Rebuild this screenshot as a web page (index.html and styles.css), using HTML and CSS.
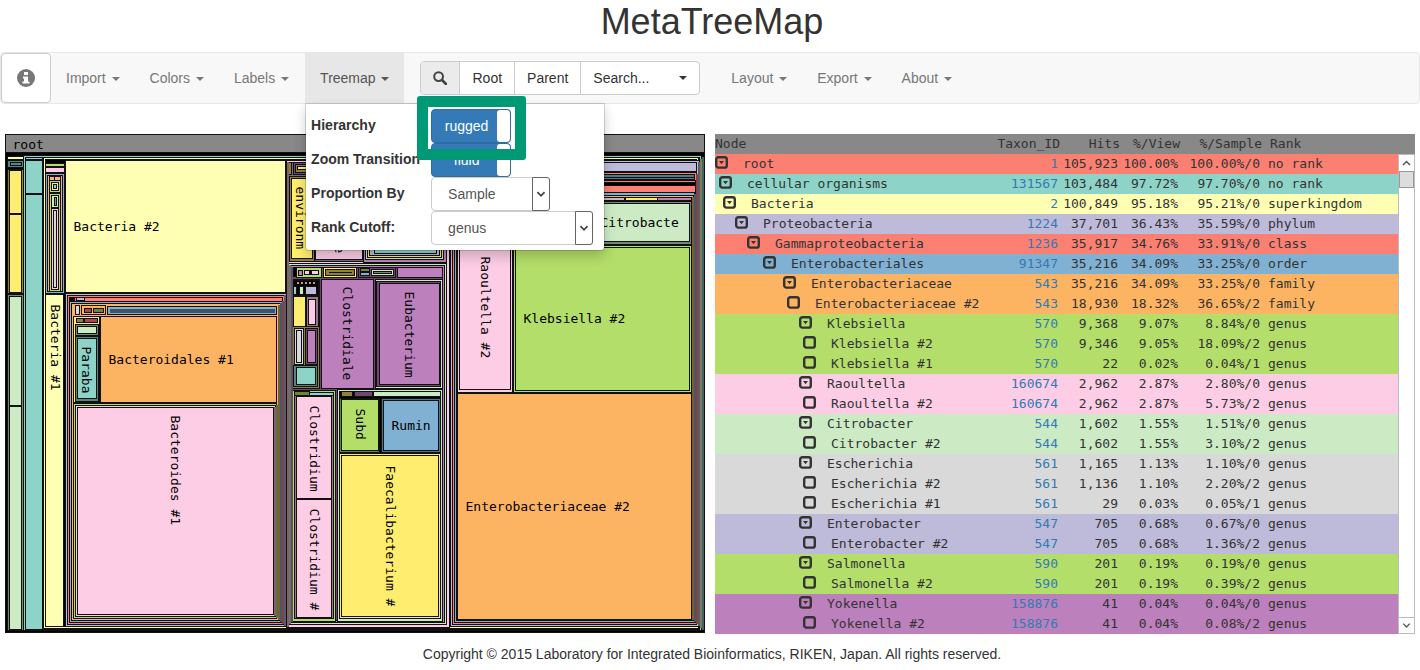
FILE: index.html
```html
<!DOCTYPE html>
<html lang="en">
<head>
<meta charset="utf-8">
<title>MetaTreeMap</title>
<link rel="stylesheet" href="styles.css">
</head>
<body>
<svg class="defs" aria-hidden="true">
  <symbol id="open" viewBox="0 0 14 14"><rect x="1.2" y="1.2" width="10.6" height="10.4" rx="2.2" fill="none" stroke="#333" stroke-width="2.4"/><path d="M4 5h5L6.500 8.200z" fill="#333"/></symbol>
  <symbol id="leaf" viewBox="0 0 14 14"><rect x="1.2" y="1.2" width="10.6" height="10.4" rx="2.2" fill="none" stroke="#333" stroke-width="2.4"/></symbol>
</svg>
<header class="title"><h1>MetaTreeMap</h1></header>
<nav class="navbar">
  <button class="info" aria-label="Information"><svg viewBox="0 0 18 18" width="18" height="18"><circle cx="9" cy="9" r="9" fill="#777"/><path d="M7 3h4v3H7zM6 7.500h5v5h1.500v2h-7v-2H7V9.500H6z" fill="#fff"/></svg></button>
  <button class="item">Import <i class="caret"></i></button>
  <button class="item">Colors <i class="caret"></i></button>
  <button class="item">Labels <i class="caret"></i></button>
  <div class="dropdown">
    <button class="item active">Treemap <i class="caret"></i></button>
    <form class="menu">
      <label for="hier">Hierarchy</label>
      <button type="button" id="hier" class="toggle"><span>rugged</span></button>
      <label for="zoom">Zoom Transition</label>
      <button type="button" id="zoom" class="toggle fluid"><span>fluid</span></button>
      <label for="prop">Proportion By</label>
      <div class="pick short"><select id="prop"><option>Sample</option></select><svg class="arrow" viewBox="0 0 18 32"><path d="M5 14l4 4 4-4" fill="none" stroke="#444" stroke-width="2"/></svg></div>
      <label for="rank">Rank Cutoff:</label>
      <div class="pick"><select id="rank"><option>genus</option></select><svg class="arrow" viewBox="0 0 18 32"><path d="M5 14l4 4 4-4" fill="none" stroke="#444" stroke-width="2"/></svg></div>
      <div class="highlight"></div>
    </form>
  </div>
  <div class="group">
    <button class="find" aria-label="Find"><svg viewBox="0 0 14 14" width="14" height="14"><circle cx="5.600" cy="5.600" r="4.400" fill="none" stroke="#444" stroke-width="2"/><path d="M9 9l4 4" stroke="#444" stroke-width="2.600" stroke-linecap="round"/></svg></button>
    <button>Root</button>
    <button>Parent</button>
    <button class="search"><span>Search...</span><i class="caret"></i></button>
  </div>
  <button class="item">Layout <i class="caret"></i></button>
  <button class="item">Export <i class="caret"></i></button>
  <button class="item">About <i class="caret"></i></button>
</nav>
<main class="panels">
<section class="panel">
<svg class="treemap" viewBox="4.5 133.5 700 500" role="img" aria-label="Treemap of taxa">
  <rect class="k" x="5" y="134" width="699" height="498"/>
  <rect class="head" x="5" y="134" width="699" height="18"/>
  <!-- outer columns -->
  <rect class="y" x="7" y="156" width="16" height="3"/>
  <rect class="td" x="7" y="160" width="16" height="7"/><rect class="td" x="10" y="162" width="11" height="3"/>
  <rect class="od" x="7" y="169" width="16" height="124"/><rect class="g" x="9" y="170" width="12" height="43"/><rect class="g" x="9" y="214" width="12" height="78"/>
  <rect class="ld" x="7" y="294" width="16" height="336"/><rect class="l" x="9" y="296" width="12" height="109"/><rect class="l" x="9" y="406" width="12" height="223"/>
  <rect class="t" x="23" y="155" width="678" height="475"/>
  <rect class="t" x="25" y="157" width="674" height="471"/>
  <rect class="v" x="25" y="157" width="17" height="2"/><rect class="t" x="25" y="160" width="17" height="33"/><rect class="t" x="25" y="194" width="17" height="435"/>
  <rect class="k" x="42" y="157" width="657" height="472"/>
  <rect class="y" x="43" y="157" width="655" height="471"/><rect class="k" x="45" y="159" width="651" height="467"/>
  <!-- small lineages beside Bacteria -->
  <rect class="gr" x="45" y="163" width="19" height="3"/><rect class="p" x="45" y="167" width="19" height="5"/>
  <rect class="b" x="45" y="173" width="19" height="120"/><rect class="o" x="47" y="175" width="15" height="116"/><rect class="o" x="49" y="176" width="11" height="4"/><path d="M54 176v5"/>
  <rect class="gr" x="49" y="180" width="11" height="12"/><rect class="g" x="51" y="182" width="7" height="8"/><rect class="t" x="53" y="184" width="3" height="4"/>
  <rect class="gr" x="49" y="193" width="11" height="98"/><rect class="l" x="51" y="195" width="7" height="12"/><rect class="m" x="54" y="197" width="2" height="8"/>
  <rect class="p" x="51" y="208" width="7" height="81"/><rect class="s" x="53" y="210" width="3" height="77"/>
  <rect class="y" x="45" y="294" width="18" height="332"/>
  <rect class="y" x="65" y="160" width="220" height="132"/>
  <!-- Bacteroidetes -->
  <rect class="v" x="65" y="293" width="222" height="333"/><rect class="r" x="67" y="295" width="218" height="329"/><rect class="r" x="69" y="297" width="213" height="4"/>
  <rect class="v" x="76" y="297" width="8" height="3"/><rect class="k" x="70" y="297" width="4" height="3"/>
  <rect class="b" x="69" y="301" width="213" height="321"/><rect class="o" x="71" y="303" width="209" height="317"/>
  <rect class="s" x="75" y="305" width="4" height="9"/><rect class="o" x="81" y="305" width="24" height="9"/><rect class="rd" x="84" y="308" width="7" height="4"/><rect class="grd" x="93" y="308" width="10" height="4"/>
  <rect class="b" x="107" y="306" width="169" height="8"/><rect fill="#3b5568" x="109" y="308" width="165" height="4"/>
  <rect class="g" x="73" y="316" width="26" height="86"/><rect class="od" x="76" y="318" width="7" height="4"/><rect class="rd" x="84" y="318" width="13" height="4"/>
  <rect class="ld" x="75" y="324" width="23" height="11"/><rect class="l" x="77" y="326" width="19" height="7"/>
  <rect class="td" x="75" y="336" width="23" height="65"/><rect class="t" x="77" y="338" width="19" height="60"/>
  <rect class="o" x="100" y="316" width="176" height="86"/>
  <rect class="gr" x="73" y="403" width="203" height="215"/><rect class="p" x="75" y="405" width="200" height="211"/><rect class="p" x="77" y="407" width="196" height="207"/>
  <g class="edges">
    <path class="ep" d="M274 406V615"/><path class="egr" d="M276 404V617"/><path class="eo" d="M278 304V619"/><path class="eb" d="M280 302V621"/><path class="er" d="M282 300V623"/><path class="ev" d="M284 294V625"/>
  </g>
  <!-- Firmicutes -->
  <rect class="p" x="286" y="160" width="163" height="467"/><rect class="vd" x="288" y="162" width="158" height="99"/>
  <rect class="od" x="288" y="162" width="3" height="12"/><rect class="md" x="293" y="162" width="30" height="12"/><rect class="od" x="295" y="164" width="22" height="8"/><rect class="g" x="297" y="166" width="14" height="3"/>
  <rect class="od" x="289" y="176" width="25" height="85"/><rect class="g" x="291" y="178" width="21" height="80"/>
  <rect class="p" x="315" y="176" width="47" height="83"/>
  <rect class="m" x="363" y="176" width="83" height="86"/><rect class="l" x="365" y="178" width="78" height="81"/><rect class="g" x="367" y="180" width="74" height="77"/><rect class="v" x="369" y="182" width="70" height="73"/><rect class="t" x="374" y="184" width="62" height="69"/>
  <rect class="l" x="288" y="263" width="158" height="361"/><rect class="m" x="290" y="265" width="154" height="357"/><rect class="md" x="292" y="267" width="150" height="353"/>
  <rect class="k" x="293" y="267" width="3" height="9"/><rect class="gr" x="296" y="267" width="25" height="10"/><rect class="m" x="298" y="270" width="4" height="5"/><rect class="p" x="304" y="270" width="14" height="4"/><rect class="k" x="309" y="271" width="2" height="2"/>
  <rect class="g" x="323" y="267" width="33" height="10"/><rect class="od" x="325" y="269" width="29" height="6"/><path d="M328 272h23"/>
  <rect class="md" x="358" y="267" width="37" height="10"/><rect class="grd" x="360" y="268" width="9" height="3"/><rect class="b" x="360" y="272" width="9" height="3"/><rect class="l" x="371" y="269" width="22" height="6"/><rect class="ld" x="373" y="271" width="18" height="2"/>
  <rect class="m" x="397" y="267" width="45" height="10"/>
  <rect class="od" x="292" y="279" width="27" height="109"/><rect class="k" x="293" y="280" width="25" height="15"/><path class="dots" d="M296 282h20"/><rect class="t" x="293" y="286" width="3" height="8"/><rect class="l" x="299" y="286" width="4" height="8"/><rect class="v" x="305" y="286" width="11" height="8"/>
  <rect class="g" x="293" y="296" width="12" height="30"/><rect class="pd" x="306" y="296" width="12" height="30"/><rect class="p" x="308" y="299" width="7" height="25"/>
  <rect class="s" x="294" y="328" width="9" height="36"/><rect class="s" x="296" y="330" width="5" height="32"/><rect class="md" x="305" y="328" width="12" height="36"/><rect class="m" x="307" y="330" width="8" height="32"/>
  <rect class="td" x="293" y="365" width="24" height="21"/><rect class="t" x="296" y="367" width="19" height="17"/>
  <rect class="m" x="321" y="279" width="52" height="109"/>
  <rect class="l" x="375" y="279" width="67" height="109"/><rect class="md" x="376" y="281" width="64" height="105"/><rect class="m" x="379" y="283" width="60" height="101"/>
  <rect class="gr" x="292" y="390" width="43" height="231"/><rect class="t" x="294" y="392" width="39" height="3"/><rect class="grd" x="294" y="391" width="15" height="4"/><rect class="pd" x="294" y="395" width="39" height="223"/><rect class="p" x="296" y="396" width="35" height="102"/><rect class="p" x="296" y="499" width="35" height="118"/>
  <rect class="l" x="337" y="389" width="105" height="232"/>
  <rect class="k" x="339" y="391" width="101" height="227"/>
  <rect class="od" x="341" y="391" width="11" height="5"/><rect class="md" x="354" y="391" width="18" height="5"/><rect class="l" x="373" y="391" width="67" height="5"/>
  <rect class="grd" x="339" y="398" width="40" height="54"/><rect class="gr" x="341" y="399" width="37" height="51"/>
  <rect class="bd" x="381" y="398" width="59" height="54"/><rect class="b" x="383" y="400" width="55" height="50"/>
  <rect class="g" x="339" y="453" width="101" height="165"/><rect class="g" x="341" y="455" width="97" height="161"/>
  <g class="edges">
    <path class="ep" d="M287 161V626"/><path class="el" d="M289 264V623"/><path class="em" d="M291 266V621"/>
  </g>
  <!-- Proteobacteria -->
  <rect class="v" x="450" y="160" width="249" height="466"/><rect class="v" x="450" y="162" width="246" height="9"/>
  <rect class="r" x="452" y="172" width="244" height="452"/><rect class="bd" x="454" y="174" width="240" height="5"/><path d="M454 177h240"/>
  <rect class="r" x="454" y="180" width="241" height="442"/><rect class="k" x="454" y="182" width="241" height="3"/><rect class="r" x="454" y="185" width="241" height="7"/>
  <rect class="b" x="454" y="192" width="240" height="430"/><rect class="o" x="456" y="195" width="237" height="425"/>
  <rect class="v" x="458" y="197" width="166" height="3"/><rect class="g" x="625" y="197" width="32" height="3"/><rect class="m" x="657" y="197" width="34" height="3"/>
  <rect class="p" x="457" y="201" width="55" height="191"/><rect class="p" x="459" y="203" width="51" height="186"/>
  <rect class="ld" x="513" y="201" width="178" height="43"/><rect class="l" x="515" y="203" width="174" height="38"/>
  <rect class="gr" x="513" y="245" width="178" height="147"/><rect class="gr" x="515" y="247" width="174" height="143"/>
  <rect class="o" x="457" y="393" width="234" height="226"/>
  <g class="edges">
    <path class="eo" d="M692 196V619"/><path class="eb" d="M694 193V621"/><path class="er" d="M696 173V623"/><path class="ev" d="M698 161V625"/><path class="ey" d="M700 158V627"/><path class="et" d="M702 156V629"/>
  </g>
  <g class="names">
    <text x="12" y="148">root</text><text x="73" y="230">Bacteria #2</text><text x="108" y="363">Bacteroidales #1</text><text x="391" y="429">Rumin</text>
    <text x="523" y="322">Klebsiella #2</text><text x="600" y="226">Citrobacte</text><text x="465" y="510">Enterobacteriaceae #2</text>
    <text transform="translate(50 304) rotate(90)">Bacteria #1</text><text transform="translate(81 346) rotate(90)">Paraba</text>
    <text transform="translate(170 415) rotate(90)">Bacteroides #1</text><text transform="translate(295 186) rotate(90)">environm</text>
    <text transform="translate(334 245) rotate(90)">e</text><text transform="translate(342 286) rotate(90)">Clostridiale</text>
    <text transform="translate(404 291) rotate(90)">Eubacterium</text><text transform="translate(309 405) rotate(90)">Clostridium</text>
    <text transform="translate(309 508) rotate(90)">Clostridium #</text><text transform="translate(355 408) rotate(90)">Subd</text>
    <text transform="translate(385 465) rotate(90)">Faecalibacterium #</text><text transform="translate(480 256) rotate(90)">Raoultella #2</text>
  </g>
</svg>
</section>
<section class="panel">
<div class="grid">
<table>
<colgroup><col><col class="w-id"><col class="w-hits"><col class="w-view"><col class="w-sample"><col class="w-rank"></colgroup>
<thead><tr><th>Node</th><th>Taxon_ID</th><th>Hits</th><th>%/View</th><th>%/Sample</th><th>Rank</th></tr></thead>
<tbody>
<tr class="red"><td class="d0"><svg><use href="#open"/></svg>root</td><td><a href="#1">1</a></td><td>105,923</td><td>100.00%</td><td>100.00%/0</td><td>no rank</td></tr>
<tr class="teal"><td class="d1"><svg><use href="#open"/></svg>cellular organisms</td><td><a href="#131567">131567</a></td><td>103,484</td><td>97.72%</td><td>97.70%/0</td><td>no rank</td></tr>
<tr class="cream"><td class="d2"><svg><use href="#open"/></svg>Bacteria</td><td><a href="#2">2</a></td><td>100,849</td><td>95.18%</td><td>95.21%/0</td><td>superkingdom</td></tr>
<tr class="violet"><td class="d3"><svg><use href="#open"/></svg>Proteobacteria</td><td><a href="#1224">1224</a></td><td>37,701</td><td>36.43%</td><td>35.59%/0</td><td>phylum</td></tr>
<tr class="red"><td class="d4"><svg><use href="#open"/></svg>Gammaproteobacteria</td><td><a href="#1236">1236</a></td><td>35,917</td><td>34.76%</td><td>33.91%/0</td><td>class</td></tr>
<tr class="blue"><td class="d5"><svg><use href="#open"/></svg>Enterobacteriales</td><td><a href="#91347">91347</a></td><td>35,216</td><td>34.09%</td><td>33.25%/0</td><td>order</td></tr>
<tr class="orange"><td class="d6"><svg><use href="#open"/></svg>Enterobacteriaceae</td><td><a href="#543">543</a></td><td>35,216</td><td>34.09%</td><td>33.25%/0</td><td>family</td></tr>
<tr class="orange"><td class="d7"><svg><use href="#leaf"/></svg>Enterobacteriaceae #2</td><td><a href="#543">543</a></td><td>18,930</td><td>18.32%</td><td>36.65%/2</td><td>family</td></tr>
<tr class="green"><td class="d8"><svg><use href="#open"/></svg>Klebsiella</td><td><a href="#570">570</a></td><td>9,368</td><td>9.07%</td><td>8.84%/0</td><td>genus</td></tr>
<tr class="green"><td class="d9"><svg><use href="#leaf"/></svg>Klebsiella #2</td><td><a href="#570">570</a></td><td>9,346</td><td>9.05%</td><td>18.09%/2</td><td>genus</td></tr>
<tr class="green"><td class="d9"><svg><use href="#leaf"/></svg>Klebsiella #1</td><td><a href="#570">570</a></td><td>22</td><td>0.02%</td><td>0.04%/1</td><td>genus</td></tr>
<tr class="pink"><td class="d8"><svg><use href="#open"/></svg>Raoultella</td><td><a href="#160674">160674</a></td><td>2,962</td><td>2.87%</td><td>2.80%/0</td><td>genus</td></tr>
<tr class="pink"><td class="d9"><svg><use href="#leaf"/></svg>Raoultella #2</td><td><a href="#160674">160674</a></td><td>2,962</td><td>2.87%</td><td>5.73%/2</td><td>genus</td></tr>
<tr class="mint"><td class="d8"><svg><use href="#open"/></svg>Citrobacter</td><td><a href="#544">544</a></td><td>1,602</td><td>1.55%</td><td>1.51%/0</td><td>genus</td></tr>
<tr class="mint"><td class="d9"><svg><use href="#leaf"/></svg>Citrobacter #2</td><td><a href="#544">544</a></td><td>1,602</td><td>1.55%</td><td>3.10%/2</td><td>genus</td></tr>
<tr class="gray"><td class="d8"><svg><use href="#open"/></svg>Escherichia</td><td><a href="#561">561</a></td><td>1,165</td><td>1.13%</td><td>1.10%/0</td><td>genus</td></tr>
<tr class="gray"><td class="d9"><svg><use href="#leaf"/></svg>Escherichia #2</td><td><a href="#561">561</a></td><td>1,136</td><td>1.10%</td><td>2.20%/2</td><td>genus</td></tr>
<tr class="gray"><td class="d9"><svg><use href="#leaf"/></svg>Escherichia #1</td><td><a href="#561">561</a></td><td>29</td><td>0.03%</td><td>0.05%/1</td><td>genus</td></tr>
<tr class="violet"><td class="d8"><svg><use href="#open"/></svg>Enterobacter</td><td><a href="#547">547</a></td><td>705</td><td>0.68%</td><td>0.67%/0</td><td>genus</td></tr>
<tr class="violet"><td class="d9"><svg><use href="#leaf"/></svg>Enterobacter #2</td><td><a href="#547">547</a></td><td>705</td><td>0.68%</td><td>1.36%/2</td><td>genus</td></tr>
<tr class="green"><td class="d8"><svg><use href="#open"/></svg>Salmonella</td><td><a href="#590">590</a></td><td>201</td><td>0.19%</td><td>0.19%/0</td><td>genus</td></tr>
<tr class="green"><td class="d9"><svg><use href="#leaf"/></svg>Salmonella #2</td><td><a href="#590">590</a></td><td>201</td><td>0.19%</td><td>0.39%/2</td><td>genus</td></tr>
<tr class="purple"><td class="d8"><svg><use href="#open"/></svg>Yokenella</td><td><a href="#158876">158876</a></td><td>41</td><td>0.04%</td><td>0.04%/0</td><td>genus</td></tr>
<tr class="purple"><td class="d9"><svg><use href="#leaf"/></svg>Yokenella #2</td><td><a href="#158876">158876</a></td><td>41</td><td>0.04%</td><td>0.08%/2</td><td>genus</td></tr>
</tbody>
</table>
<div class="scrollbar">
  <button aria-label="Scroll up"><svg viewBox="0 0 15 16"><path d="M4 10l3.500-3.500L11 10" fill="none" stroke="#555" stroke-width="1.500"/></svg></button>
  <div class="thumb"></div>
  <button class="down" aria-label="Scroll down"><svg viewBox="0 0 15 16"><path d="M4 6l3.500 3.500L11 6" fill="none" stroke="#555" stroke-width="1.500"/></svg></button>
</div>
</div>
</section>
</main>
<footer>Copyright © 2015 Laboratory for Integrated Bioinformatics, RIKEN, Japan. All rights reserved.</footer>
</body>
</html>
```
FILE: styles.css
```css
* { box-sizing: border-box; }
body { margin: 0; font: 14px/20px "Liberation Sans", Arial, sans-serif; color: #333; background: #fff; }
button, select { font: inherit; color: inherit; margin: 0; padding: 0; border: 0; background: none; }
.defs { display: none; }
.title { padding: 0 0 8px 4px; text-align: center; }
h1 { margin: 0; font-size: 36px; line-height: 44px; font-weight: 400; }

.navbar { display: flex; height: 52px; background: #f8f8f8; border: 1px solid #e7e7e7; border-radius: 4px; }
.info { width: 50px; height: 50px; background: #fff; border: 1px solid #ccc; border-radius: 4px; display: flex; align-items: center; justify-content: center; }
.item { padding: 0 15px; height: 50px; color: #777; white-space: nowrap; }
.active { background: #e7e7e7; color: #555; }
.caret { display: inline-block; margin-left: 2px; vertical-align: middle; border-top: 4px solid; border-left: 4px solid transparent; border-right: 4px solid transparent; }
.group { display: flex; height: 34px; margin: 8px 16px; border: 1px solid #ccc; border-radius: 4px; background: #fff; overflow: hidden; }
.group button { padding: 0 12px; border-left: 1px solid #ccc; }
.group .find { padding: 0 12px; border-left: 0; background: #ebebeb; display: flex; align-items: center; }
.group .search { width: 119px; display: flex; align-items: center; justify-content: space-between; }

.dropdown { position: relative; margin-left: 1px; }
.menu { position: absolute; z-index: 2; top: 50px; left: 0; width: 300px; padding: 5px; display: grid; grid-template-columns: 120px 1fr; align-items: center; background: #fff; border: 1px solid rgba(0, 0, 0, .15); border-radius: 0 0 4px 4px; background-clip: padding-box; box-shadow: 0 6px 12px rgba(0, 0, 0, .18); }
.menu label { padding-bottom: 2px; font-weight: 700; white-space: nowrap; }
.toggle { width: 80px; height: 34px; padding-right: 13px; display: flex; color: #fff; background: #337ab7; border: 1px solid #2e6da4; border-radius: 4px; overflow: hidden; position: relative; }
.toggle span { flex: 1; line-height: 32px; padding-left: 4px; }
.toggle::after { content: ""; position: absolute; right: 0; top: 0; width: 13px; height: 32px; background: #fff; border-radius: 3px; }
.pick { position: relative; width: 162px; height: 34px; }
.short { width: 119px; }
.pick select { appearance: none; width: 100%; height: 34px; padding-left: 16px; color: #555; background: #fff; border: 1px solid #ccc; border-radius: 4px; }
.arrow { position: absolute; right: 0; top: 0; width: 18px; height: 34px; border: 1px solid #666; border-radius: 0 3px 3px 0; background: #fff; }
.highlight { position: absolute; left: 111px; top: -8px; width: 109px; height: 64px; border: 11px solid #009975; border-radius: 3px; }

.panels { display: grid; grid-template-columns: 1fr 1fr; padding-top: 30px; }
.panel { padding: 0 5px; min-width: 0; }
.treemap { display: block; width: 100%; shape-rendering: crispEdges; }
.treemap rect[class], .treemap path { stroke: #111; stroke-width: 1; }
.treemap .head { fill: #888; stroke: #888; }
.treemap .k { fill: #000; stroke: #000; }
.treemap .y { fill: #ffffb3; }
.treemap .g { fill: #ffed6f; }
.treemap .od { fill: #8d8236; }
.treemap .t { fill: #8dd3c7; }
.treemap .td { fill: #55857d; }
.treemap .l { fill: #ccebc5; }
.treemap .ld { fill: #748872; }
.treemap .v { fill: #bebada; }
.treemap .vd { fill: #6f6b80; }
.treemap .p { fill: #fccde5; }
.treemap .pd { fill: #96798a; }
.treemap .m { fill: #bc80bd; }
.treemap .md { fill: #70486f; }
.treemap .r { fill: #fb8072; }
.treemap .rd { fill: #a84c48; }
.treemap .b { fill: #80b1d3; }
.treemap .bd { fill: #547791; }
.treemap .o { fill: #fdb462; }
.treemap .gr { fill: #b3de69; }
.treemap .grd { fill: #6a8739; }
.treemap .s { fill: #d9d9d9; }
.treemap .dots { stroke: #c96; stroke-width: 2; stroke-dasharray: 2 2; }
.treemap .edges path { stroke-width: 2; }
.treemap .edges .ep { stroke: #80626f; }
.treemap .edges .egr { stroke: #5c7036; }
.treemap .edges .eo { stroke: #7f5a35; }
.treemap .edges .eb { stroke: #41596b; }
.treemap .edges .er { stroke: #7d4640; }
.treemap .edges .ev { stroke: #5e5a6e; }
.treemap .edges .ey { stroke: #7c7c5a; }
.treemap .edges .et { stroke: #436660; }
.treemap .edges .el { stroke: #66755f; }
.treemap .edges .em { stroke: #65486a; }
.names, .grid { font-family: "DejaVu Sans Mono", "Liberation Mono", monospace; font-size: 13px; }

.grid { display: flex; background: #888; line-height: 20px; }
table { flex: 1; min-width: 0; table-layout: fixed; border-collapse: collapse; }
.w-id { width: 76px; }
.w-hits, .w-view { width: 60px; }
.w-sample { width: 82px; }
.w-rank { width: 136px; }
th, td { height: 20px; padding: 0 2px 0 0; text-align: right; font-weight: 400; white-space: nowrap; }
th { padding-right: 0; }
th:first-child, td:first-child, th:last-child, td:last-child { text-align: left; }
td:last-child { padding-left: 6px; }
th:last-child { padding-left: 8px; }
td svg { width: 14px; height: 14px; margin-right: 14px; vertical-align: -2px; }
td a { color: #337ab7; text-decoration: none; }
.d1 { padding-left: 4px; }
.d2 { padding-left: 8px; }
.d3 { padding-left: 20px; }
.d4 { padding-left: 32px; }
.d5 { padding-left: 48px; }
.d6 { padding-left: 68px; }
.d7 { padding-left: 72px; }
.d8 { padding-left: 84px; }
.d9 { padding-left: 88px; }
.red { background: #fb8072; }
.teal { background: #8dd3c7; }
.cream { background: #ffffb3; }
.violet { background: #bebada; }
.blue { background: #80b1d3; }
.orange { background: #fdb462; }
.green { background: #b3de69; }
.pink { background: #fccde5; }
.mint { background: #ccebc5; }
.gray { background: #d9d9d9; }
.purple { background: #bc80bd; }
.scrollbar { width: 17px; margin-top: 20px; display: flex; flex-direction: column; background: #fff; border: 1px solid #bbb; }
.scrollbar button { height: 16px; display: flex; }
.scrollbar .down { margin-top: auto; border-top: 1px solid #bbb; }
.thumb { height: 17px; background: #ddd; border: 1px solid #999; }
footer { padding: 10px 0 6px 4px; text-align: center; }
```
